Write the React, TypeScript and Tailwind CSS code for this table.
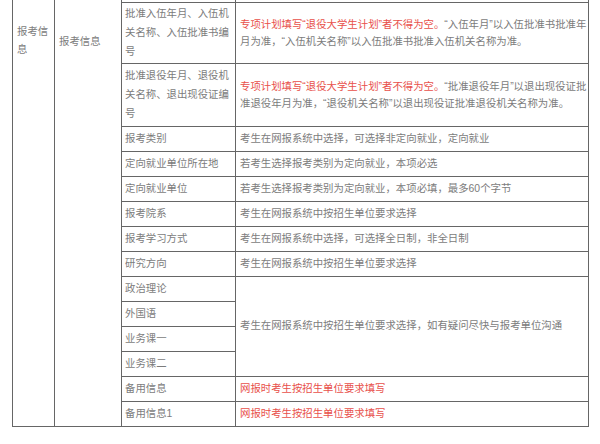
const cell = 'border border-[#666666] align-middle'

const rows: { name: string; desc?: string; red?: boolean }[] = [
  { name: '报考类别', desc: '考生在网报系统中选择，可选择非定向就业，定向就业' },
  { name: '定向就业单位所在地', desc: '若考生选择报考类别为定向就业，本项必选' },
  { name: '定向就业单位', desc: '若考生选择报考类别为定向就业，本项必填，最多60个字节' },
  { name: '报考院系', desc: '考生在网报系统中按招生单位要求选择' },
  { name: '报考学习方式', desc: '考生在网报系统中选择，可选择全日制，非全日制' },
  { name: '研究方向', desc: '考生在网报系统中按招生单位要求选择' },
]

const courses = ['政治理论', '外国语', '业务课一', '业务课二']

const spare = ['备用信息', '备用信息1']

export default function App() {
  return (
    <div className="w-[600px] h-[444px] bg-white overflow-hidden text-[10.4px] text-[#7c7c7c] font-['Liberation_Sans','Noto_Sans_CJK_SC',sans-serif]">
      <table className="ml-[12px] w-[576px] table-fixed border-collapse">
        <colgroup>
          <col className="w-[42px]" />
          <col className="w-[67px]" />
          <col className="w-[114px]" />
          <col className="w-[353px]" />
        </colgroup>
        <tbody>
          <tr>
            <td rowSpan={16} className="border border-t-0 border-[#666666] align-top pl-[4px] pr-[2px] pt-[23px] leading-[18px]">
              报考信息
            </td>
            <td rowSpan={16} className="border border-t-0 border-[#666666] align-top pl-[4px] pt-[33px] leading-[18px]">
              报考信息
            </td>
            <td className="border border-t-0 border-[#666666] h-[2px] p-0" />
            <td className="border border-t-0 border-[#666666] h-[2px] p-0" />
          </tr>
          <tr>
            <td className={`${cell} h-[61px] pl-[3px] pr-[2px] leading-[19px]`}>
              批准入伍年月、入伍机关名称、入伍批准书编号
            </td>
            <td className={`${cell} pl-[4px] leading-[17px] whitespace-nowrap`}>
              <span className="text-[#e8504a]">专项计划填写“退役大学生计划”者不得为空。</span>“入伍年月”以入伍批准书批准年
              <br />
              月为准，“入伍机关名称”以入伍批准书批准入伍机关名称为准。
            </td>
          </tr>
          <tr>
            <td className={`${cell} h-[63px] pl-[3px] pr-[2px] leading-[19px]`}>
              批准退役年月、退役机关名称、退出现役证编号
            </td>
            <td className={`${cell} pl-[4px] leading-[17px] whitespace-nowrap`}>
              <span className="text-[#e8504a]">专项计划填写“退役大学生计划”者不得为空。</span>“批准退役年月”以退出现役证批
              <br />
              准退役年月为准，“退役机关名称”以退出现役证批准退役机关名称为准。
            </td>
          </tr>
          {rows.map(r => (
            <tr key={r.name}>
              <td className={`${cell} h-[25px] pl-[3px] whitespace-nowrap`}>{r.name}</td>
              <td className={`${cell} pl-[4px] whitespace-nowrap`}>{r.desc}</td>
            </tr>
          ))}
          {courses.map((c, i) => (
            <tr key={c}>
              <td className={`${cell} h-[25px] pl-[3px] whitespace-nowrap`}>{c}</td>
              {i === 0 && (
                <td rowSpan={4} className={`${cell} pl-[4px] whitespace-nowrap`}>
                  考生在网报系统中按招生单位要求选择，如有疑问尽快与报考单位沟通
                </td>
              )}
            </tr>
          ))}
          {spare.map(s => (
            <tr key={s}>
              <td className={`${cell} h-[25px] pl-[3px] whitespace-nowrap`}>{s}</td>
              <td className={`${cell} pl-[4px] whitespace-nowrap text-[#e8504a]`}>网报时考生按招生单位要求填写</td>
            </tr>
          ))}
        </tbody>
      </table>
    </div>
  )
}
